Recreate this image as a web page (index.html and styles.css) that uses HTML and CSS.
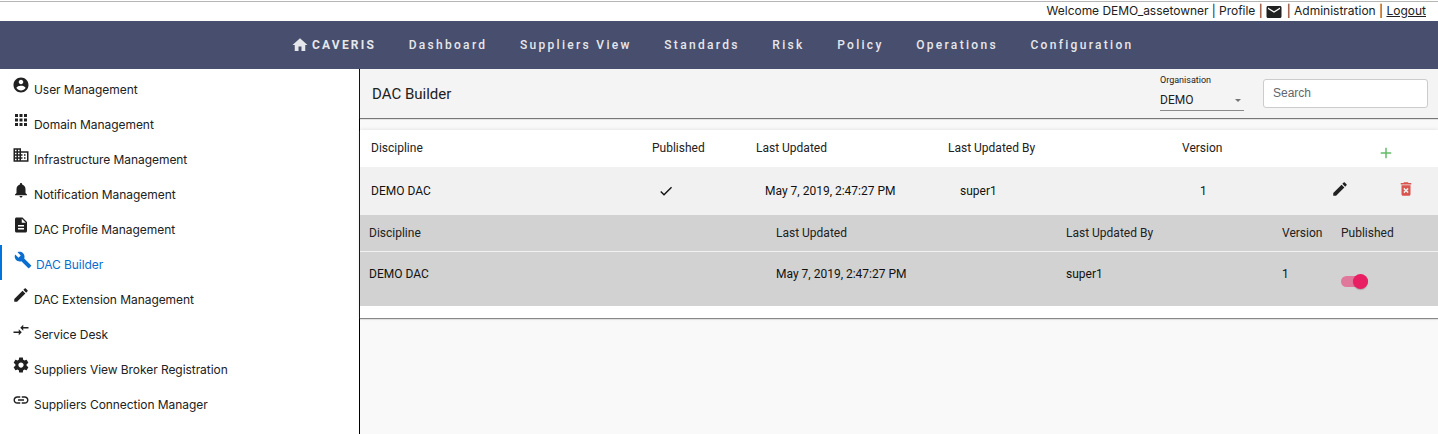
FILE: index.html
```html
<!DOCTYPE html>
<html lang="en">

<head>
    <meta charset="utf-8">
    <title>DAC Builder</title>
    <link rel="stylesheet" href="styles.css">
</head>

<body>
    <div class="top-bar">
        <span>Welcome DEMO_assetowner | Profile |</span>
        <svg class="icon mail" viewBox="0 0 24 24"><path d="M20 4H4c-1.100 0-2 .9-2 2v12c0 1.100.9 2 2 2h16c1.100 0 2-.9 2-2V6c0-1.100-.9-2-2-2zm0 4l-8 5-8-5V6l8 5 8-5v2z"/></svg>
        <span>| Administration | <a href="#">Logout</a></span>
    </div>

    <nav class="main-nav">
        <a class="brand" href="#"><svg class="icon" viewBox="0 0 24 24"><path d="M10 20v-6h4v6h5v-8h3L12 3 2 12h3v8z"/></svg>CAVERIS</a>
        <a href="#">Dashboard</a>
        <a href="#">Suppliers View</a>
        <a href="#">Standards</a>
        <a href="#">Risk</a>
        <a href="#">Policy</a>
        <a href="#">Operations</a>
        <a href="#">Configuration</a>
    </nav>

    <div class="page">
        <div class="sidebar">
            <a href="#"><svg class="icon" viewBox="0 0 24 24"><path d="M12 2C6.480 2 2 6.480 2 12s4.480 10 10 10 10-4.480 10-10S17.520 2 12 2zm0 3c1.660 0 3 1.340 3 3s-1.340 3-3 3-3-1.340-3-3 1.340-3 3-3zm0 14.200c-2.500 0-4.710-1.280-6-3.220.030-1.990 4-3.080 6-3.080 1.990 0 5.970 1.090 6 3.080-1.290 1.940-3.500 3.220-6 3.220z"/></svg>User Management</a>
            <a href="#"><svg class="icon" viewBox="0 0 24 24"><path d="M4 8h4V4H4v4zm6 12h4v-4h-4v4zm-6 0h4v-4H4v4zm0-6h4v-4H4v4zm6 0h4v-4h-4v4zm6-10v4h4V4h-4zm-6 4h4V4h-4v4zm6 6h4v-4h-4v4zm0 6h4v-4h-4v4z"/></svg>Domain Management</a>
            <a href="#"><svg class="icon" viewBox="0 0 24 24"><path d="M12 7V3H2v18h20V7H12zM6 19H4v-2h2v2zm0-4H4v-2h2v2zm0-4H4V9h2v2zm0-4H4V5h2v2zm4 12H8v-2h2v2zm0-4H8v-2h2v2zm0-4H8V9h2v2zm0-4H8V5h2v2zm10 12h-8v-2h2v-2h-2v-2h2v-2h-2V9h8v10zm-2-8h-2v2h2v-2zm0 4h-2v2h2v-2z"/></svg>Infrastructure Management</a>
            <a href="#"><svg class="icon" viewBox="0 0 24 24"><path d="M12 22c1.100 0 2-.9 2-2h-4c0 1.100.89 2 2 2zm6-6v-5c0-3.070-1.640-5.640-4.500-6.320V4c0-.83-.67-1.500-1.500-1.500s-1.500.67-1.500 1.500v.68C7.630 5.360 6 7.920 6 11v5l-2 2v1h16v-1l-2-2z"/></svg>Notification Management</a>
            <a href="#"><svg class="icon" viewBox="0 0 24 24"><path d="M14 2H6c-1.100 0-1.990.9-1.990 2L4 20c0 1.100.89 2 1.990 2H18c1.100 0 2-.9 2-2V8l-6-6zm2 16H8v-2h8v2zm0-4H8v-2h8v2zm-3-5V3.500L18.500 9H13z"/></svg>DAC Profile Management</a>
            <a class="active" href="#"><svg class="icon" viewBox="0 0 24 24"><path d="M22.700 19l-9.100-9.100c.9-2.300.4-5-1.500-6.900-2-2-5-2.400-7.400-1.300L9 6 6 9 1.600 4.700C.4 7.100.9 10.100 2.900 12.100c1.900 1.900 4.600 2.400 6.900 1.500l9.100 9.100c.4.4 1 .4 1.400 0l2.300-2.300c.5-.4.5-1.100.1-1.400z"/></svg>DAC Builder</a>
            <a href="#"><svg class="icon" viewBox="0 0 24 24"><path d="M3 17.250V21h3.750L17.810 9.940l-3.750-3.750L3 17.250zM20.710 7.040c.39-.39.39-1.020 0-1.410l-2.340-2.340c-.39-.39-1.020-.39-1.410 0l-1.830 1.830 3.750 3.750 1.830-1.830z"/></svg>DAC Extension Management</a>
            <a href="#"><svg class="icon" viewBox="0 0 24 24"><path d="M9.010 14H2v2h7.010v3L13 15l-3.990-4v3zm5.980-1v-3H22V8h-7.010V5L11 9l3.990 4z"/></svg>Service Desk</a>
            <a href="#"><svg class="icon" viewBox="0 0 24 24"><path d="M19.430 12.980c.04-.32.07-.64.07-.98s-.03-.66-.07-.98l2.110-1.650c.19-.15.24-.42.12-.64l-2-3.460c-.12-.22-.39-.3-.61-.22l-2.490 1c-.52-.4-1.080-.73-1.690-.98l-.38-2.650C14.460 2.180 14.250 2 14 2h-4c-.25 0-.46.18-.49.42l-.38 2.650c-.61.25-1.170.59-1.690.98l-2.490-1c-.23-.09-.49 0-.61.22l-2 3.460c-.13.22-.07.49.12.64l2.110 1.650c-.04.32-.07.65-.07.98s.03.66.07.98l-2.110 1.650c-.19.15-.24.42-.12.64l2 3.460c.12.22.39.3.61.22l2.490-1c.52.4 1.080.73 1.690.98l.38 2.650c.03.24.24.42.49.42h4c.25 0 .46-.18.49-.42l.38-2.650c.61-.25 1.170-.59 1.690-.98l2.490 1c.23.09.49 0 .61-.22l2-3.460c.12-.22.07-.49-.12-.64l-2.110-1.650zM12 15.500c-1.930 0-3.500-1.570-3.500-3.500s1.570-3.500 3.500-3.500 3.500 1.570 3.500 3.500-1.570 3.500-3.500 3.500z"/></svg>Suppliers View Broker Registration</a>
            <a href="#"><svg class="icon" viewBox="0 0 24 24"><path d="M3.900 12c0-1.710 1.390-3.100 3.100-3.100h4V7H7c-2.760 0-5 2.240-5 5s2.240 5 5 5h4v-1.900H7c-1.710 0-3.100-1.390-3.100-3.100zM8 13h8v-2H8v2zm9-6h-4v1.900h4c1.710 0 3.100 1.390 3.100 3.100s-1.390 3.100-3.100 3.100h-4V17h4c2.760 0 5-2.240 5-5s-2.240-5-5-5z"/></svg>Suppliers Connection Manager</a>
        </div>

        <div class="content">
            <div class="toolbar">
                <h1>DAC Builder</h1>
                <div class="select">
                    <label>Organisation</label>
                    <div class="select-value">DEMO<span class="arrow"></span></div>
                </div>
                <input class="search" type="text" placeholder="Search">
            </div>

            <div class="card">
                <div class="row head">
                    <span>Discipline</span>
                    <span>Published</span>
                    <span>Last Updated</span>
                    <span>Last Updated By</span>
                    <span>Version</span>
                    <span></span>
                    <span class="add"><svg class="icon" viewBox="0 0 24 24"><path d="M19 13h-6v6h-2v-6H5v-2h6V5h2v6h6v2z"/></svg></span>
                </div>
                <div class="row data">
                    <span>DEMO DAC</span>
                    <span class="check"><svg class="icon" viewBox="0 0 24 24"><path d="M9 16.170L4.830 12l-1.420 1.410L9 19 21 7l-1.410-1.410z"/></svg></span>
                    <span class="date">May 7, 2019, 2:47:27 PM</span>
                    <span class="user">super1</span>
                    <span class="version">1</span>
                    <span class="edit"><svg class="icon" viewBox="0 0 24 24"><path d="M3 17.250V21h3.750L17.810 9.940l-3.750-3.750L3 17.250zM20.710 7.040c.39-.39.39-1.020 0-1.410l-2.340-2.340c-.39-.39-1.020-.39-1.410 0l-1.830 1.830 3.750 3.750 1.830-1.830z"/></svg></span>
                    <span class="delete"><svg class="icon" viewBox="0 0 24 24"><path d="M6 19c0 1.100.9 2 2 2h8c1.100 0 2-.9 2-2V7H6v12zm2.460-7.120l1.410-1.410L12 12.590l2.120-2.120 1.410 1.410L13.410 14l2.120 2.120-1.410 1.410L12 15.410l-2.120 2.120-1.410-1.410L10.590 14l-2.130-2.120zM15.500 4l-1-1h-5l-1 1H5v2h14V4z"/></svg></span>
                </div>
                <div class="history">
                    <div class="sub-row sub-head">
                        <span>Discipline</span>
                        <span>Last Updated</span>
                        <span>Last Updated By</span>
                        <span>Version</span>
                        <span>Published</span>
                    </div>
                    <div class="sub-row sub-data">
                        <span>DEMO DAC</span>
                        <span>May 7, 2019, 2:47:27 PM</span>
                        <span>super1</span>
                        <span>1</span>
                        <span class="toggle"><span class="thumb"></span></span>
                    </div>
                </div>
            </div>
        </div>
    </div>
</body>

</html>
```
FILE: styles.css
```css
* {
    box-sizing: border-box;
}

body {
    margin: 0;
    height: 434px;
    overflow: hidden;
    background: #ffffff;
    color: #212121;
    font-family: Roboto, sans-serif;
    font-size: 12px;
}

a {
    color: inherit;
    text-decoration: none;
}

.icon {
    width: 18px;
    height: 18px;
    fill: currentColor;
    flex: none;
}

.top-bar {
    display: flex;
    justify-content: flex-end;
    height: 21px;
    padding: 2px 12px 0 0;
    font-family: Inter, sans-serif;
    line-height: 18px;
    background: linear-gradient(#ffffff 1px, #b5b5b5 1px, #b5b5b5 2px, #ffffff 2px);
}

.top-bar a {
    text-decoration: underline;
}

.top-bar span:first-child {
    letter-spacing: -0.03px;
}

.top-bar .mail {
    margin: 1px 4px 0 2px;
}

.main-nav {
    display: flex;
    height: 48px;
    padding-left: 291px;
    align-items: center;
    gap: 32.6px;
    background: #484e6d;
    color: #e6e7ec;
    font-weight: 500;
    letter-spacing: 2.3px;
}

.brand {
    display: flex;
    align-items: center;
    font-weight: 700;
    letter-spacing: 2.2px;
}

.brand .icon {
    margin-right: 3px;
}

.page {
    display: flex;
    height: 365px;
}

.sidebar {
    width: 360px;
    padding-top: 1px;
    border-right: 1px solid #000000;
    font-family: Inter, sans-serif;
    letter-spacing: -0.06px;
}

.sidebar a {
    display: flex;
    height: 35px;
    padding: 6px 0 0 12px;
    line-height: 28px;
}

.sidebar .icon {
    margin-right: 4px;
}

.sidebar .active {
    border-left: 2px solid #0074d9;
    color: #0a6ed1;
}

.content {
    flex: 1;
    background: #f9f9f9;
}

.toolbar {
    display: flex;
    height: 49px;
    padding-left: 12px;
    background: #f4f4f4;
    box-shadow: 0 1px 1px #777777;
}

.toolbar h1 {
    margin: 0;
    width: 788px;
    font-size: 15px;
    font-weight: 400;
    line-height: 50px;
}

.select {
    width: 84px;
    margin-right: 19px;
}

.select label {
    display: block;
    padding-top: 5px;
    font-size: 9px;
    line-height: 12px;
}

.select-value {
    display: flex;
    align-items: center;
    justify-content: space-between;
    height: 25px;
    padding: 4px 3px 0 0;
    border-bottom: 1px solid #8a8a8a;
}

.arrow {
    border: 3.5px solid transparent;
    border-top-color: #757575;
    border-bottom: 0;
}

.search {
    width: 165px;
    height: 29px;
    margin-top: 10px;
    padding: 0 9px 2px;
    border: 1px solid #cccccc;
    border-radius: 3px;
    background: #ffffff;
    font-family: "Liberation Sans", Arial, sans-serif;
    font-size: 12px;
}

.search::placeholder {
    color: #5f676e;
}

.card {
    height: 188px;
    margin-top: 12px;
    background: #ffffff;
    box-shadow: 0 1px 1px #888888, 0 0 4px rgba(0, 0, 0, 0.12);
}

.row {
    display: grid;
    grid-template-columns: 281px 104px 192px 234px 149px 61px 40px;
    padding-left: 11px;
}

.head {
    height: 37px;
    line-height: 36px;
}

.data {
    height: 48px;
    line-height: 48px;
    background: #f1f1f1;
    color: #111111;
}

.row .icon {
    display: block;
    width: 18px;
    height: 18px;
}

.add {
    margin-left: -20px;
    padding: 14px 0 0 5px;
    color: #66bb6a;
}

.row .check .icon {
    width: 16px;
    height: 16px;
}

.check {
    padding: 16px 0 0 6px;
}

.date {
    padding-left: 9px;
}

.user {
    padding-left: 12px;
}

.version {
    padding-left: 18px;
}

.edit {
    padding-top: 13px;
    color: #212121;
}

.delete {
    padding: 13px 0 0 5px;
    color: #d9534f;
}

.history {
    background: #d2d2d2;
}

.sub-row {
    display: grid;
    grid-template-columns: 407px 290px 216px 59px 1fr;
    padding-left: 9px;
}

.sub-head {
    height: 37px;
    line-height: 36px;
    border-bottom: 1px solid #f1f1f1;
}

.sub-data {
    height: 54px;
    line-height: 44px;
    color: #111111;
}

.toggle {
    display: flex;
    justify-content: flex-end;
    align-items: center;
    width: 27px;
    height: 11px;
    margin-top: 24px;
    border-radius: 6px;
    background: #e0789c;
}

.thumb {
    width: 15px;
    height: 15px;
    flex: none;
    border-radius: 50%;
    background: #e91e63;
    box-shadow: 0 1px 1px rgba(0, 0, 0, 0.2);
}
```
